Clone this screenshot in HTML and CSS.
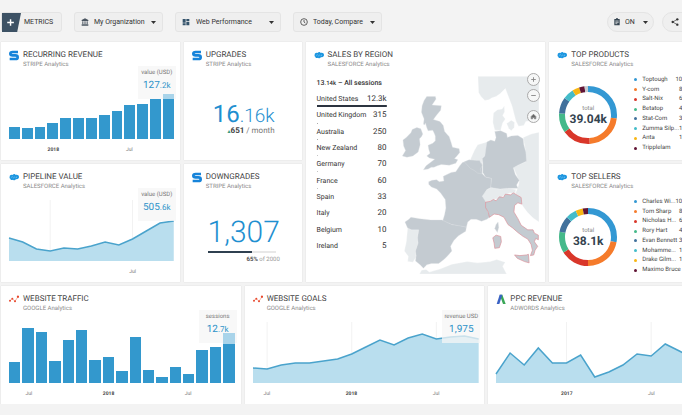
FILE: index.html
```html
<!DOCTYPE html>
<html lang="en">
<head>
<meta charset="utf-8">
<title>Web Performance</title>
<link rel="stylesheet" href="styles.css">
</head>
<body>
<svg class="sprite" aria-hidden="true">
  <symbol id="stripe" viewBox="0 0 30 33"><path d="M27 6H11Q4 6 4 11T11 16H19Q26 16 26 21.500T19 27H2" fill="none" stroke="#1784da" stroke-width="8"/></symbol>
  <symbol id="salesforce" viewBox="0 0 30 33"><path d="M2 14c0-5 5-7 9-5c3-4 8-3 9 0c5-2 10 1 10 6s-5 8-9 6c-2 4-6 5-9 2c-4 3-8 0-8-3c-2-1-3-3-2-6z" fill="#1c96e0"/><path d="M7 16l4-2m2 4l4-3m3 2l4-2" stroke="#9fd3f3" stroke-width="2"/></symbol>
  <symbol id="ga" viewBox="0 0 30 33"><path d="M3 20L10 14L18 22L27 8" fill="none" stroke="#f08a72" stroke-width="2"/><g fill="#e8492e"><circle cx="3" cy="20" r="3"/><circle cx="10" cy="14" r="3"/><circle cx="18" cy="22" r="3"/><circle cx="27" cy="8" r="3.500"/></g></symbol>
  <symbol id="adwords" viewBox="0 0 30 33"><path d="M11 2h8l10 28h-8z" fill="#3aa757"/><path d="M11 2h8l-9 28H2z" fill="#3a62c4"/></symbol>
  <symbol id="caret" viewBox="0 0 10 6"><path d="M0 0h10L5 6z" fill="#333"/></symbol>
</svg>

<div class="page">
  <header class="toolbar">
    <button class="pill metrics" type="button">
      <svg class="plus" viewBox="0 0 20 20" aria-hidden="true"><path d="M0 0h20l-4 20H0z" fill="#3d5265"/><path d="M9 6.500v7M5.500 10h7" stroke="#fff" stroke-width="1.500"/></svg>
      METRICS
    </button>
    <label class="pill org">
      <svg class="glyph" viewBox="0 0 24 24" aria-label="Organization"><path d="M12 1l10 5v3H2V6zM4 10h3v8H4zm6.500 0h3v8h-3zM17 10h3v8h-3zM2 19h20v4H2z" fill="#4a5560"/></svg>
      <select><option>My Organization</option></select>
      <svg class="caret"><use href="#caret"/></svg>
    </label>
    <label class="pill board">
      <svg class="glyph" viewBox="0 0 24 24" aria-label="Dashboard"><path d="M2 3h9v11H2zM2 16h9v6H2zM13 3h9v6h-9zM13 11h9v11h-9z" fill="#34536b"/></svg>
      <select><option>Web Performance</option></select>
      <svg class="caret"><use href="#caret"/></svg>
    </label>
    <label class="pill period">
      <svg class="glyph" viewBox="0 0 24 24" aria-label="Period"><circle cx="12" cy="12" r="10" fill="none" stroke="#444" stroke-width="2.500"/><path d="M12 6v6l4 3" fill="none" stroke="#444" stroke-width="2.500"/></svg>
      <select><option>Today, Compare</option></select>
      <svg class="caret"><use href="#caret"/></svg>
    </label>
    <label class="pill round alerts">
      <svg class="glyph" viewBox="0 0 24 24" aria-label="Alerts"><path d="M4 3h5a3 3 0 0 1 6 0h5v19H4z" fill="#34434f"/><path d="M7 9h10M7 13h10M7 17h6" stroke="#fff" stroke-width="2"/></svg>
      <select><option>ON</option></select>
      <svg class="caret"><use href="#caret"/></svg>
    </label>
    <button class="pill round share" type="button" aria-label="Share">
      <svg class="glyph" viewBox="0 0 24 24"><path d="M19 4L5 12l14 8" fill="none" stroke="#333" stroke-width="2"/><g fill="#333"><circle cx="19" cy="4" r="3.500"/><circle cx="5" cy="12" r="3.500"/><circle cx="19" cy="20" r="3.500"/></g></svg>
      <svg class="caret"><use href="#caret"/></svg>
    </button>
  </header>

  <main class="grid">
    <section class="card w3">
      <div class="head"><svg><use href="#stripe"/></svg><div><h2>RECURRING REVENUE</h2><p>STRIPE Analytics</p></div></div>
      <div class="tip"><span>value (USD)</span><strong>127<small>.2k</small></strong></div>
      <div class="bars">
        <i style="height:17%"></i><i style="height:16%"></i><i style="height:17%"></i><i style="height:23%"></i><i style="height:29%"></i><i style="height:29%"></i><i style="height:30%"></i><i style="height:34%"></i><i style="height:40%"></i><i style="height:48%"></i><i style="height:50%"></i><i style="height:57%"></i><i class="partial" style="height:64%;--solid:89%"></i>
      </div>
      <div class="axis n13"><b style="--i:4">2018</b><span style="--i:10">Jul</span></div>
    </section>

    <section class="card w2">
      <div class="head"><svg><use href="#stripe"/></svg><div><h2>UPGRADES</h2><p>STRIPE Analytics</p></div></div>
      <div class="kpi">
        <div class="figure mixed">16<small>.16k</small></div>
        <div class="change"><i>▴</i><b>651</b> / month</div>
      </div>
    </section>

    <section class="card w4 tall">
      <div class="head"><svg><use href="#salesforce"/></svg><div><h2>SALES BY REGION</h2><p>SALESFORCE Analytics</p></div></div>
      <div class="region">
        <table>
          <caption>13<small>.14k</small> – All sessions</caption>
          <tr style="--share:100%"><th>United States</th><td>12.3k</td></tr>
          <tr style="--share:2%"><th>United Kingdom</th><td>315</td></tr>
          <tr style="--share:2%"><th>Australia</th><td>250</td></tr>
          <tr style="--share:1%"><th>New Zealand</th><td>80</td></tr>
          <tr style="--share:1%"><th>Germany</th><td>70</td></tr>
          <tr style="--share:1%"><th>France</th><td>60</td></tr>
          <tr style="--share:0%"><th>Spain</th><td>33</td></tr>
          <tr style="--share:0%"><th>Italy</th><td>20</td></tr>
          <tr style="--share:0%"><th>Belgium</th><td>10</td></tr>
          <tr style="--share:0%"><th>Ireland</th><td>5</td></tr>
        </table>
        <div class="map">
          <svg viewBox="30 50 420 605" role="img" aria-label="Map of western Europe">
            <g fill="#e7ebed" stroke="#fff" stroke-width="1">
              <path d="M263 51H448V182L408 188L402 200L386 202L378 186L366 140L346 88L330 104L318 112L306 116L296 122L284 124L272 112L265 100Z"/>
              <path d="M310 162L322 152L336 150L343 140L344 158L338 170L346 180L338 192L334 206L332 215L314 214L308 190Z"/>
              <path d="M350 194L364 184L374 190L373 206L364 216L356 208Z"/>
              <path d="M400 236L424 226L448 220V492L430 480L412 462L396 440L394 418L376 406L384 388L388 370L378 345L370 326L408 310L406 270Z"/>
              <path d="M240 303L252 276L262 258L290 250L290 268L284 292L276 300L276 316L256 306Z"/>
              <path d="M276 412L290 394L302 388L330 392L352 390L378 394L376 406L360 404L342 412L330 420L312 424L300 430L286 430L276 422Z"/>
              <path d="M50 510L62 516L84 516L80 540L82 556L74 580L76 598L66 614L50 612L52 596L40 580L46 552Z"/>
              <path d="M86 650L92 638L106 636L116 644L150 634L184 620L230 612L262 616L300 612L320 606L346 614L338 626L350 650Z"/>
            </g>
            <g fill="#c4cbd1" stroke="#dfe4e7" stroke-width="1">
              <path d="M108 112H134L136 120L124 138L152 140L150 154L138 168L128 182L148 188L158 200L162 218L176 234L182 252L186 266L206 270L208 282L198 294L192 300L202 304L196 314L176 320L152 318L140 322L130 326L122 326L112 332L98 334L106 322L122 310L132 302L116 298L108 292L118 284L114 272L112 260L126 254L134 246L134 232L130 222L126 214L112 216L108 206L104 192L102 198L98 196L100 180L92 160L94 140L100 124Z"/>
              <path d="M34 292L44 276L38 262L36 244L46 236L60 222L64 212L78 206L90 210L96 226L92 234L86 240L88 258L82 280L66 292L48 296Z"/>
              <path d="M208 322L216 312L228 308L244 304L256 306L276 316L276 346L286 356L304 360L302 388L290 394L276 414L286 430V444L294 464L300 476L290 484L274 490L258 484L242 484L232 492L228 508L210 506L184 500L156 490L162 470L166 450L164 424L150 404L138 392L122 386L114 378V370L124 366L138 364L146 370L160 368L158 354L166 350L182 342L196 340Z"/>
              <path d="M222 310L236 304L252 306L268 306L276 322L270 332L274 346L262 344L252 336L240 330Z"/>
              <path d="M314 218L332 216L350 224L352 236L364 232L384 230L400 240L402 258L408 280L410 308L384 320L370 328L376 348L388 366L380 380L384 390L352 390L330 392L302 388L304 360L286 356L278 342L278 316L276 300L284 292L290 250L302 244L314 248L318 236Z"/>
              <path d="M42 492L54 484L60 478L86 482L120 486L154 486L184 500L210 504L228 508L226 520L204 534L190 548L180 566L184 580L170 596L160 606L144 618L122 618L108 622L98 632L88 622L74 610L76 594L74 580L82 556L80 540L84 516L62 516L50 510Z"/>
              <path d="M318 500L324 492L326 508L322 524L314 512Z"/>
            </g>
            <g fill="#c4cbd1" stroke="#dc8f98" stroke-width="2">
              <path d="M286 432L300 430L310 424L318 428L328 416L340 418L346 408L362 410L370 404L384 412L394 418L396 438L384 434L374 442L372 462L384 482L394 502L414 516L430 516L434 526L446 532V546L438 542L434 552L444 566L436 578L432 592L422 594L428 578L424 560L414 544L400 536L384 524L368 510L354 500L342 478L326 470L312 468L298 478L294 462L286 448Z"/>
              <path d="M308 540L318 532L332 536L334 552L328 570L314 572L312 556Z"/>
              <path d="M374 592L390 594L410 592L416 590L418 616L404 612L382 602Z"/>
            </g>
          </svg>
          <div class="controls">
            <button type="button" aria-label="Zoom in"><svg viewBox="0 0 12 12"><path d="M6 3.500v5M3.500 6h5"/></svg></button>
            <button type="button" aria-label="Zoom out"><svg viewBox="0 0 12 12"><path d="M3.500 6h5"/></svg></button>
            <button type="button" aria-label="Reset map"><svg viewBox="0 0 12 12"><path d="M6 3.500L8.500 6v2.500H7V7H5v1.500H3.500V6z" fill="#666"/></svg></button>
          </div>
        </div>
      </div>
    </section>

    <section class="card w3">
      <div class="head"><svg><use href="#salesforce"/></svg><div><h2>TOP PRODUCTS</h2><p>SALESFORCE Analytics</p></div></div>
      <div class="share-body">
        <div class="donut">
          <svg viewBox="0 0 60 60" aria-hidden="true"><g class="ring">
            <circle class="blue" cx="30" cy="30" r="26" pathLength="100" stroke-dasharray="27 73"/>
            <circle class="orange" cx="30" cy="30" r="26" pathLength="100" stroke-dasharray="22 78" stroke-dashoffset="-27"/>
            <circle class="red" cx="30" cy="30" r="26" pathLength="100" stroke-dasharray="16 84" stroke-dashoffset="-49"/>
            <circle class="green" cx="30" cy="30" r="26" pathLength="100" stroke-dasharray="11 89" stroke-dashoffset="-65"/>
            <circle class="slate" cx="30" cy="30" r="26" pathLength="100" stroke-dasharray="9 91" stroke-dashoffset="-76"/>
            <circle class="cyan" cx="30" cy="30" r="26" pathLength="100" stroke-dasharray="6 94" stroke-dashoffset="-85"/>
            <circle class="yellow" cx="30" cy="30" r="26" pathLength="100" stroke-dasharray="4 96" stroke-dashoffset="-91"/>
            <circle class="maroon" cx="30" cy="30" r="26" pathLength="100" stroke-dasharray="3 97" stroke-dashoffset="-95"/>
            <circle class="gray" cx="30" cy="30" r="26" pathLength="100" stroke-dasharray="2 98" stroke-dashoffset="-98"/>
          </g></svg>
          <div class="total"><span>total</span><strong>39.04k</strong></div>
        </div>
        <ul class="legend">
          <li class="blue"><span>Toptough</span><em>10.2k</em></li>
          <li class="orange"><span>Y-com</span><em>8.5k</em></li>
          <li class="red"><span>Salt-Nix</span><em>6.1k</em></li>
          <li class="green"><span>Betatop</span><em>4.3k</em></li>
          <li class="slate"><span>Stat-Com</span><em>3.5k</em></li>
          <li class="cyan"><span>Zumma Silp...</span><em>1.9k</em></li>
          <li class="yellow"><span>Anta</span><em>1.5k</em></li>
          <li class="maroon"><span>Tripplelam</span><em></em></li>
        </ul>
      </div>
    </section>

    <section class="card w3">
      <div class="head"><svg><use href="#salesforce"/></svg><div><h2>PIPELINE VALUE</h2><p>SALESFORCE Analytics</p></div></div>
      <svg class="area" viewBox="0 0 120 71" preserveAspectRatio="none" aria-hidden="true">
        <path class="rule" d="M30 10V71M90 10V71"/>
        <path class="fill" d="M0 48L10 52L20 59L30 61L40 58L50 59L60 56L70 52L80 55L90 49L100 41L110 33L120 31V71H0Z"/>
        <path class="line" d="M0 48L10 52L20 59L30 61L40 58L50 59L60 56L70 52L80 55L90 49L100 41L110 33L120 31"/>
      </svg>
      <div class="tip"><span>value (USD)</span><strong>505<small>.6k</small></strong></div>
      <div class="axis n12"><span class="mid" style="--i:9">Jul</span></div>
    </section>

    <section class="card w2">
      <div class="head"><svg><use href="#stripe"/></svg><div><h2>DOWNGRADES</h2><p>STRIPE Analytics</p></div></div>
      <div class="kpi">
        <div class="figure">1,307</div>
        <div class="progress"><i style="width:65%"></i></div>
        <div class="goal"><b>65%</b> of 2000</div>
      </div>
    </section>

    <section class="card w3">
      <div class="head"><svg><use href="#salesforce"/></svg><div><h2>TOP SELLERS</h2><p>SALESFORCE Analytics</p></div></div>
      <div class="share-body">
        <div class="donut">
          <svg viewBox="0 0 60 60" aria-hidden="true"><g class="ring">
            <circle class="blue" cx="30" cy="30" r="26" pathLength="100" stroke-dasharray="28 72"/>
            <circle class="orange" cx="30" cy="30" r="26" pathLength="100" stroke-dasharray="22 78" stroke-dashoffset="-28"/>
            <circle class="red" cx="30" cy="30" r="26" pathLength="100" stroke-dasharray="16 84" stroke-dashoffset="-50"/>
            <circle class="green" cx="30" cy="30" r="26" pathLength="100" stroke-dasharray="12 88" stroke-dashoffset="-66"/>
            <circle class="slate" cx="30" cy="30" r="26" pathLength="100" stroke-dasharray="9 91" stroke-dashoffset="-78"/>
            <circle class="cyan" cx="30" cy="30" r="26" pathLength="100" stroke-dasharray="6 94" stroke-dashoffset="-87"/>
            <circle class="yellow" cx="30" cy="30" r="26" pathLength="100" stroke-dasharray="4 96" stroke-dashoffset="-93"/>
            <circle class="maroon" cx="30" cy="30" r="26" pathLength="100" stroke-dasharray="3 97" stroke-dashoffset="-97"/>
          </g></svg>
          <div class="total"><span>total</span><strong>38.1k</strong></div>
        </div>
        <ul class="legend">
          <li class="blue"><span>Charles Wi...</span><em>10.1k</em></li>
          <li class="orange"><span>Tom Sharp</span><em>8.2k</em></li>
          <li class="red"><span>Nicholas H...</span><em>6.1k</em></li>
          <li class="green"><span>Rory Hart</span><em>4.4k</em></li>
          <li class="slate"><span>Evan Bennett</span><em>3.3k</em></li>
          <li class="cyan"><span>Mohamme...</span><em>1.9k</em></li>
          <li class="yellow"><span>Drake Gilm...</span><em>1.4k</em></li>
          <li class="maroon"><span>Maximo Bruce</span><em></em></li>
        </ul>
      </div>
    </section>

    <section class="card w4">
      <div class="head"><svg><use href="#ga"/></svg><div><h2>WEBSITE TRAFFIC</h2><p>GOOGLE Analytics</p></div></div>
      <div class="tip"><span>sessions</span><strong>12<small>.7k</small></strong></div>
      <div class="bars">
        <i style="height:29%"></i><i style="height:77%"></i><i style="height:72%"></i><i style="height:31%"></i><i style="height:60%"></i><i style="height:75%"></i><i style="height:32%"></i><i style="height:37%"></i><i style="height:17%"></i><i style="height:65%"></i><i style="height:18%"></i><i style="height:9%"></i><i style="height:23%"></i><i style="height:13%"></i><i style="height:46%"></i><i style="height:51%"></i><i class="partial" style="height:71%;--solid:78%"></i>
      </div>
      <div class="axis n17"><span style="--i:2">Jul</span><b style="--i:8">2018</b><span style="--i:14">Jul</span></div>
    </section>

    <section class="card w4">
      <div class="head"><svg><use href="#ga"/></svg><div><h2>WEBSITE GOALS</h2><p>GOOGLE Analytics</p></div></div>
      <svg class="area" viewBox="0 0 160 71" preserveAspectRatio="none" aria-hidden="true">
        <path class="rule" d="M10 10V71M70 10V71M130 10V71"/>
        <path class="fill" d="M0 56L10 57L20 53L30 51L40 51L50 49L60 47L70 42L80 35L90 28L100 33L110 26L120 22L130 27L140 25L150 24L160 27V71H0Z"/>
        <path class="line" d="M0 56L10 57L20 53L30 51L40 51L50 49L60 47L70 42L80 35L90 28L100 33L110 26L120 22L130 27L140 25L150 24L160 27"/>
      </svg>
      <div class="tip"><span>revenue USD</span><strong>1,975</strong></div>
      <div class="axis n16"><span class="mid" style="--i:1">Jul</span><b class="mid" style="--i:7">2018</b><span class="mid" style="--i:13">Jul</span></div>
    </section>

    <section class="card w4">
      <div class="head"><svg><use href="#adwords"/></svg><div><h2>PPC REVENUE</h2><p>ADWORDS Analytics</p></div></div>
      <svg class="area" viewBox="0 0 160 71" preserveAspectRatio="none" aria-hidden="true">
        <path class="rule" d="M50 10V71M110 10V71"/>
        <path class="fill" d="M0 62L10 41L20 53L30 36L40 51L50 51L60 43L70 65L80 60L90 53L100 42L110 44L120 32L130 39L140 46L150 38L160 34V71H0Z"/>
        <path class="line" d="M0 62L10 41L20 53L30 36L40 51L50 51L60 43L70 65L80 60L90 53L100 42L110 44L120 32L130 39L140 46L150 38L160 34"/>
      </svg>
      <div class="axis n16"><b class="mid" style="--i:5">2017</b><span class="mid" style="--i:11">Jul</span></div>
    </section>
  </main>
</div>
</body>
</html>
```
FILE: styles.css
```css
* { box-sizing: border-box; }
html { overflow: hidden; }
body { margin: 0; overflow: hidden; background: #f3f3f3; color: #333; font: 7px/8px Roboto, "Liberation Sans", sans-serif; text-rendering: geometricPrecision; }
h2, p, ul { margin: 0; padding: 0; font-weight: 400; }
button, select { font: inherit; color: inherit; }
.sprite { position: absolute; width: 0; height: 0; }

/* The board runs past the right edge of the window. */
.page { margin-right: -46px; padding-left: 1px; }

.toolbar { display: flex; gap: 12px; padding: 12px 36px 10px 0; }
.pill { display: flex; align-items: center; height: 20px; padding: 0 6px; gap: 6px; background: #efefef; border: 1px solid #e4e4e4; border-radius: 3px; font-size: 7px; }
.pill select { flex: 1; min-width: 0; padding: 0; border: 0; background: none; appearance: none; }
.glyph { width: 8px; height: 8px; flex: none; }
.caret { width: 5px; height: 3px; flex: none; }
.metrics { width: 61px; padding: 0; gap: 3px; }
.plus { width: 19px; height: 19px; flex: none; }
.org { width: 89px; gap: 5px; }
.board { width: 106px; }
.period { width: 89px; gap: 5px; }
.round { border-radius: 10px; }
.alerts { width: 47px; margin-left: auto; padding: 0 5px; gap: 4px; }
.share { width: 30px; margin-left: -4px; padding: 0 8px; gap: 3px; }

.grid { display: grid; grid-template-columns: repeat(12, minmax(0, 1fr)); grid-auto-rows: minmax(118px, auto); gap: 4px; }
.card { position: relative; display: flex; flex-direction: column; min-width: 0; padding: 8px 6px 6px 8px; background: #fff; box-shadow: 0 0 1px #ccc; }
.w2 { grid-column: span 2; }
.w3 { grid-column: span 3; }
.w4 { grid-column: span 4; }
.tall { grid-row: span 2; }

.head { display: flex; gap: 4px; height: 18px; }
.head svg { width: 10px; height: 11px; flex: none; }
.head h2 { font-size: 8px; line-height: 10px; white-space: nowrap; color: #444; }
.head p { font-size: 6px; line-height: 10px; white-space: nowrap; color: #8a8a8a; }

.tip { position: absolute; top: 24px; right: 4px; display: flex; flex-direction: column; align-items: center; width: 38px; height: 33px; padding-top: 3px; background: rgba(245, 245, 245, .75); font-size: 6px; white-space: nowrap; color: #777; }
.tip span, .tip strong { position: relative; z-index: 2; }
.tip strong { font-size: 10px; line-height: 18px; font-weight: 400; color: #2e93c9; }
.tip small { font-size: 8px; }

.bars { flex: 1; display: flex; align-items: flex-end; gap: 2px; }
.bars i { flex: 1; background: #3398cd; }
.bars .partial { z-index: 1; background: linear-gradient(to top, #3398cd var(--solid), #a9d4ea var(--solid)); }
.area { flex: 1 1 71px; width: 100%; height: 71px; min-height: 0; overflow: visible; }
.area path { vector-effect: non-scaling-stroke; }
.rule { stroke: #f2f2f2; fill: none; }
.fill { fill: #b9deee; }
.line { fill: none; stroke: #4aa3cc; stroke-width: 1.5; }

.axis { display: grid; height: 15px; padding-top: 7px; font-size: 5px; line-height: 8px; color: #777; }
.axis > * { grid-row: 1; grid-column: var(--i); justify-self: center; width: 0; display: flex; justify-content: center; }
.axis .mid { grid-column: var(--i) / span 2; }
.axis b { color: #444; }
.n12 { grid-template-columns: repeat(12, 1fr); }
.n13 { grid-template-columns: repeat(13, 1fr); }
.n16 { grid-template-columns: repeat(16, 1fr); }
.n17 { grid-template-columns: repeat(17, 1fr); }

.kpi { align-self: center; display: flex; flex-direction: column; margin-top: 26px; text-align: right; }
.figure { font-size: 30px; line-height: 34px; font-weight: 300; color: #1f8fd0; }
.figure.mixed { margin-top: 9px; font-size: 24px; line-height: 22px; font-weight: 400; }
.figure.mixed small { font-size: 19px; font-weight: 300; }
.change { font-size: 8px; line-height: 8px; color: #777; }
.change b { color: #444; }
.change i { font-style: normal; font-size: 6px; color: #3a9a7c; }
.progress { height: 2px; margin: 1px 4px 0 0; background: #e8e8e8; }
.progress i { display: block; height: 100%; background: #2f4050; }
.goal { margin-top: 3px; font-size: 6px; color: #999; }
.goal b { color: #555; }

.region { flex: 1; display: flex; gap: 14px; padding-left: 3px; }
.region table { align-self: flex-start; flex: 0 0 70px; margin-top: 11px; border-collapse: collapse; height: 163px; }
.region caption { height: 12px; text-align: left; white-space: nowrap; font-weight: 500; }
.region caption small { font-size: 6px; }
.region tr { background: linear-gradient(#2c3440, #2c3440) no-repeat 0 100% / var(--share) 2px; }
.region tr + tr { background: linear-gradient(#aaa, #aaa) no-repeat 0 100% / var(--share) 1px; }
.region th, .region td { padding: 0; font-weight: 400; text-align: left; white-space: nowrap; }
.region td { font-size: 8px; text-align: right; }
.map { position: relative; flex: 1; margin-top: 8px; }
.map > svg { display: block; width: 100%; }
.controls { position: absolute; top: -3px; right: -1px; }
.controls button { display: block; width: 13px; height: 13px; margin-bottom: 3px; padding: 0; border: 1px solid #aaa; border-radius: 50%; background: #f6f7f7; }
.controls button:last-child { margin-top: 8px; }
.controls svg { display: block; width: 11px; height: 11px; fill: none; stroke: #888; }

.share-body { display: flex; align-items: center; padding-left: 1px; gap: 16px; margin-top: 7px; }
.donut { display: grid; place-items: center; flex: none; margin-top: 2px; }
.donut > * { grid-area: 1 / 1; }
.donut svg { width: 60px; height: 60px; }
.ring { transform: rotate(-90deg); transform-origin: center; fill: none; stroke: currentColor; stroke-width: 6; }
.ring circle { stroke: currentColor; }
.total { text-align: center; font-size: 6px; color: #888; }
.total strong { display: block; font-size: 12px; line-height: 13px; font-weight: 700; color: #34434f; }
.legend { display: flex; flex-direction: column; height: 78px; list-style: none; }
.legend li { flex: 1; display: flex; align-items: center; font-size: 6px; }
.legend li::before { content: ""; width: 3px; height: 3px; margin-right: 5px; border-radius: 50%; background: currentColor; }
.legend span { width: 35px; white-space: nowrap; color: #444; }
.legend em { width: 13px; display: flex; justify-content: flex-end; font-style: normal; color: #444; }
.blue { color: #3398d3; }
.orange { color: #f57b2b; }
.red { color: #d9372a; }
.green { color: #45b98a; }
.slate { color: #41719c; }
.cyan { color: #44bcc9; }
.yellow { color: #f8b614; }
.maroon { color: #611434; }
.gray { color: #c8ccd0; }
```
